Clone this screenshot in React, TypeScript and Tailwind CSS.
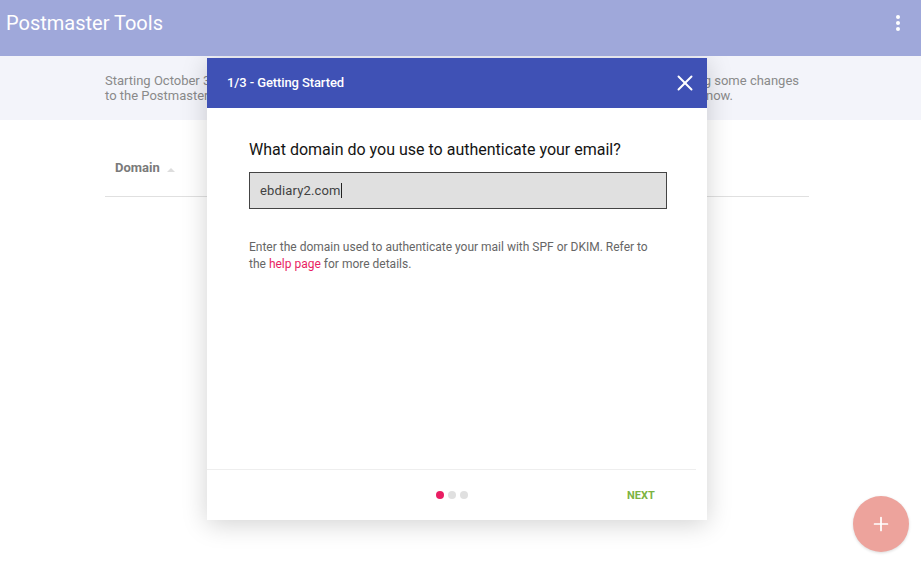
import React from 'react';
import { Plus, X } from 'lucide-react';

const StepDots: React.FC = () => (
  <div className="flex gap-1">
    <span className="h-2 w-2 rounded-full bg-[#e91e63]" />
    <span className="h-2 w-2 rounded-full bg-[#e0e0e0]" />
    <span className="h-2 w-2 rounded-full bg-[#e0e0e0]" />
  </div>
);

const SetupDialog: React.FC = () => (
  <div className="absolute left-[207px] top-[58px] flex h-[462px] w-[500px] flex-col bg-white shadow-[0_4px_24px_rgba(0,0,0,0.18)]">
    {/* Header */}
    <div className="flex h-[50px] items-center justify-between bg-[#3f51b5] pl-5 pr-[9px] text-white">
      <span className="text-[13px] font-medium tracking-[-0.1px]">1/3 - Getting Started</span>
      <X className="h-[26px] w-[26px]" strokeWidth={1.8} />
    </div>

    {/* Body */}
    <div className="flex-1 px-[42px] pt-[32px]">
      <h2 className="text-[16px] leading-[20px] text-[#141414]">What domain do you use to authenticate your email?</h2>
      <div className="mt-[12px] flex h-[37px] w-[418px] items-center border border-[#444] bg-[#e0e0e0] pl-[10px] text-[13px] tracking-[0.15px] text-[#424242]">
        ebdiary2.com<span className="h-[15px] w-px bg-[#222]" />
      </div>
      <p className="mt-[30px] text-[12px] leading-[17px] text-[#666666]">
        Enter the domain used to authenticate your mail with SPF or DKIM. Refer to
        <br />
        the <span className="text-[#e91e63]">help page</span> for more details.
      </p>
    </div>

    {/* Footer */}
    <div className="mr-[11px] flex h-[51px] items-center border-t border-[#eeeeee] pl-[229px]">
      <StepDots />
      <span className="ml-[159px] pt-[2px] text-[11px] font-bold text-[#7cb342]">NEXT</span>
    </div>
  </div>
);

export default function App() {
  return (
    <div className="relative h-[581px] w-[921px] overflow-hidden bg-white font-['Roboto',sans-serif]">
      {/* App bar */}
      <div className="relative z-10 flex h-[56px] items-center justify-between bg-[#9fa8da] pb-[10px] pl-[6px] pr-[21px] text-white">
        <span className="text-[20px]">Postmaster Tools</span>
        <div className="flex flex-col gap-[2px]">
          <span className="h-1 w-1 rounded-full bg-white" />
          <span className="h-1 w-1 rounded-full bg-white" />
          <span className="h-1 w-1 rounded-full bg-white" />
        </div>
      </div>

      {/* Notice banner */}
      <div className="h-[64px] bg-[#f3f4fa] pl-[105px] pr-[122px] pt-[17px] text-[13px] leading-[15px] text-[#8a8a8a]">
        <div className="flex justify-between">
          <span>Starting October 31,</span>
          <span>making some changes</span>
        </div>
        <div className="flex justify-between pr-[66px]">
          <span>to the Postmaster</span>
          <span>know.</span>
        </div>
      </div>

      {/* Domain table */}
      <div className="ml-[105px] mr-[112px] mt-[20px] flex h-[57px] items-center border-b border-[#e0e0e0] pl-[10px] text-[#7a7a7a]">
        <span className="text-[13px] font-bold">Domain</span>
        <span className="ml-[7px] mt-[3px] h-0 w-0 border-x-[4px] border-b-[4px] border-x-transparent border-b-[#dddddd]" />
      </div>

      <SetupDialog />

      {/* Add button */}
      <button className="absolute left-[853px] top-[496px] flex h-14 w-14 items-center justify-center rounded-full bg-[#eda39c] text-white shadow-[0_1px_3px_rgba(0,0,0,0.15)]">
        <Plus className="h-[22px] w-[22px]" strokeWidth={1.9} />
      </button>
    </div>
  );
}
